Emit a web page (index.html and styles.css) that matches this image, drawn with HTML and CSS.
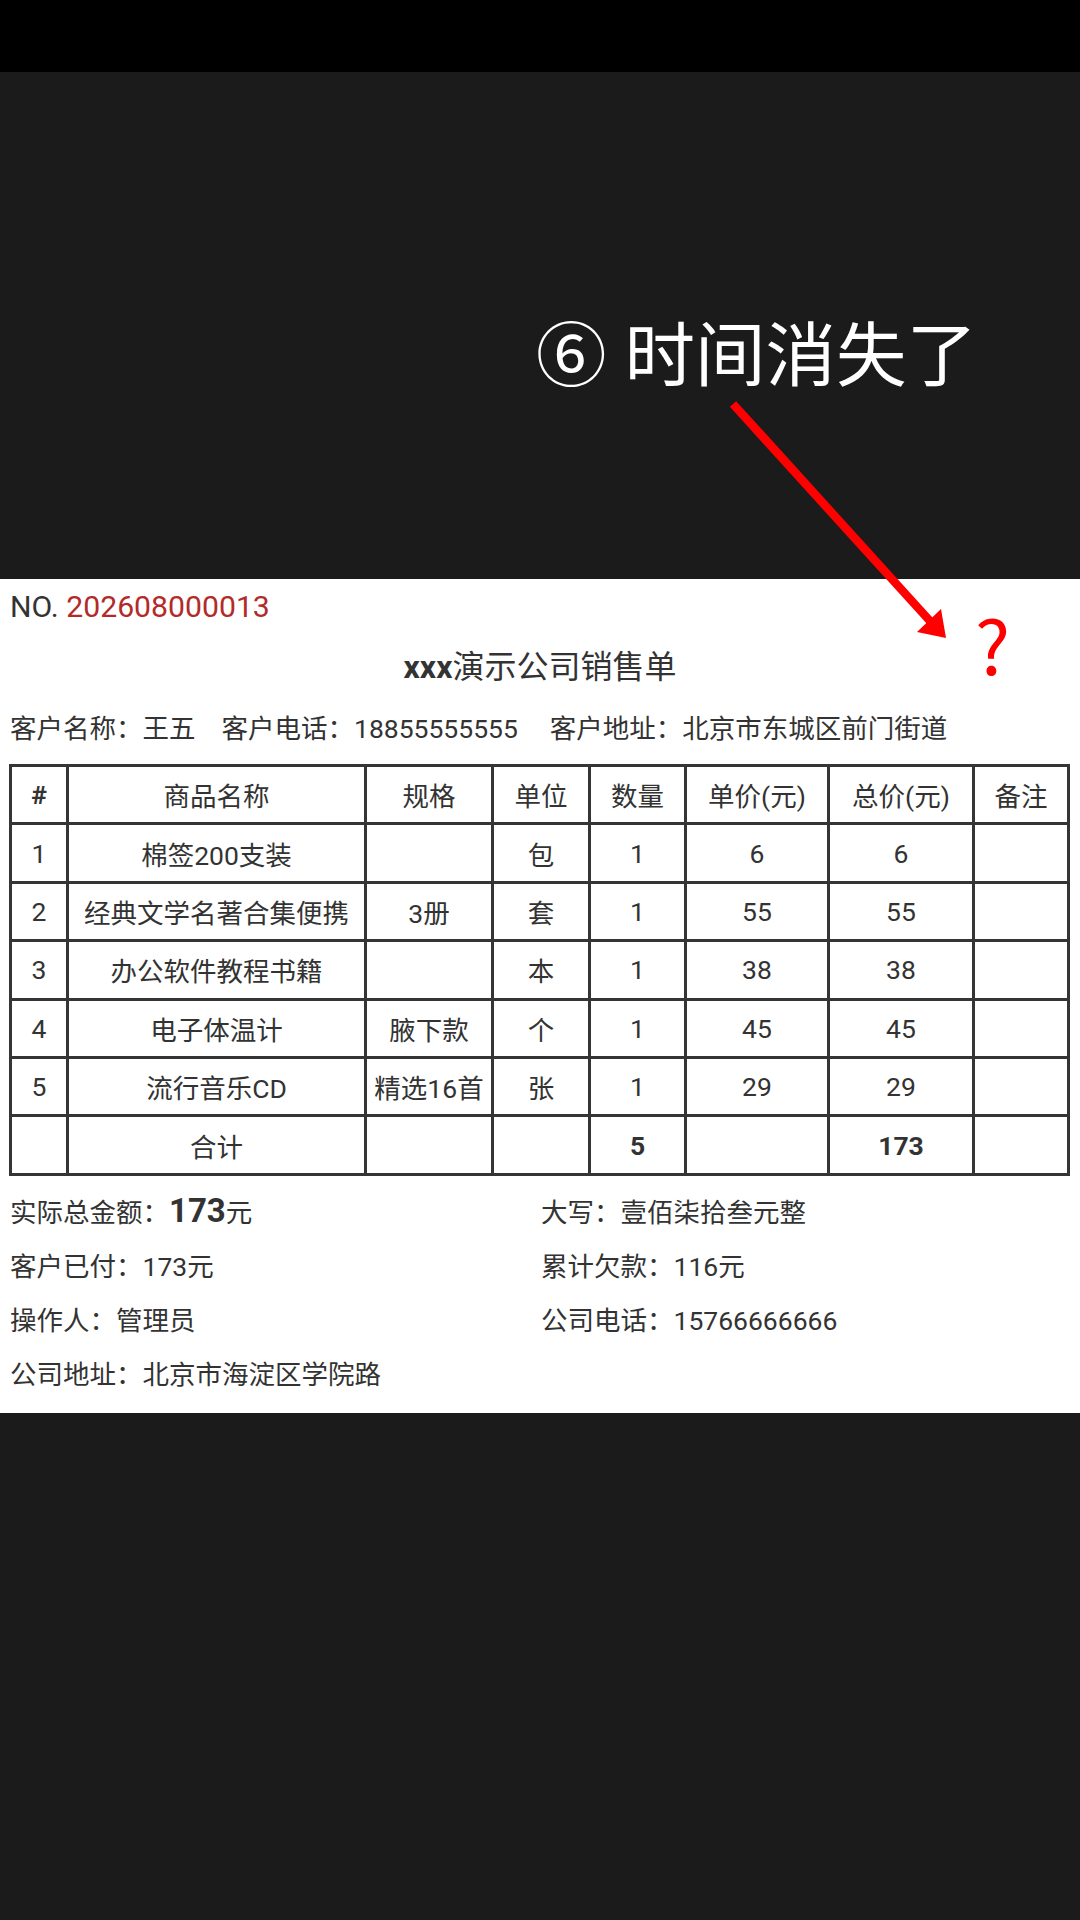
FILE: index.html
```html
<!DOCTYPE html>
<html lang="zh-CN">
<head>
<meta charset="utf-8">
<title>xxx演示公司销售单</title>
<link rel="stylesheet" href="styles.css">
</head>
<body>
<div class="screen">
  <div class="statusbar"></div>
  <div class="backdrop"></div>
  <div class="sheet">
    <div class="no">NO. <span class="no-num">202608000013</span></div>
    <div class="title"><b>xxx</b>演示公司销售单</div>
    <div class="customer">
      <span>客户名称：王五</span>
      <span class="phone">客户电话：18855555555</span>
      <span>客户地址：北京市东城区前门街道</span>
    </div>
    <table class="items">
      <colgroup>
        <col class="c1"><col class="c2"><col class="c3"><col class="c4"><col class="c5"><col class="c6"><col class="c7"><col class="c8">
      </colgroup>
      <thead>
        <tr><th class="hash">#</th><th>商品名称</th><th>规格</th><th>单位</th><th>数量</th><th>单价(元)</th><th>总价(元)</th><th>备注</th></tr>
      </thead>
      <tbody>
        <tr><td>1</td><td>棉签200支装</td><td></td><td>包</td><td>1</td><td>6</td><td>6</td><td></td></tr>
        <tr><td>2</td><td>经典文学名著合集便携</td><td>3册</td><td>套</td><td>1</td><td>55</td><td>55</td><td></td></tr>
        <tr><td>3</td><td>办公软件教程书籍</td><td></td><td>本</td><td>1</td><td>38</td><td>38</td><td></td></tr>
        <tr><td>4</td><td>电子体温计</td><td>腋下款</td><td>个</td><td>1</td><td>45</td><td>45</td><td></td></tr>
        <tr><td>5</td><td>流行音乐CD</td><td>精选16首</td><td>张</td><td>1</td><td>29</td><td>29</td><td></td></tr>
        <tr><td></td><td>合计</td><td></td><td></td><td class="strong">5</td><td></td><td class="strong">173</td><td></td></tr>
      </tbody>
    </table>
    <div class="summary">
      <div>实际总金额：<span class="big">173</span>元</div>
      <div>大写：壹佰柒拾叁元整</div>
      <div>客户已付：173元</div>
      <div>累计欠款：116元</div>
      <div>操作人：管理员</div>
      <div>公司电话：15766666666</div>
      <div>公司地址：北京市海淀区学院路</div>
      <div></div>
    </div>
  </div>

  <div class="note"><span class="circ">⑥</span>时间消失了</div>
  <svg class="arrow" width="1080" height="1920" viewBox="0 0 1080 1920">
    <line x1="733" y1="404" x2="930" y2="621" stroke="#ff0000" stroke-width="8.5"/>
    <polygon points="946,638 917,632 941,609" fill="#ff0000"/>
  </svg>
  <span class="qmark">?</span>
</div>
</body>
</html>
```
FILE: styles.css
```css
* { box-sizing: border-box; }

body {
  margin: 0;
  background: #1b1b1b;
  font-family: Roboto, "Noto Sans CJK SC", sans-serif;
  color: #333;
}

.screen {
  position: relative;
  width: 1080px;
  height: 1920px;
  overflow: hidden;
}

.statusbar {
  height: 72px;
  background: #000;
}

.backdrop {
  height: 507px;
}

.sheet {
  background: #fff;
  height: 834px;
  padding: 8px 10px 0;
}

.no {
  font-size: 30.2px;
  line-height: 40px;
}

.no-num {
  color: #b22a2a;
}

.title {
  margin-top: 20px;
  text-align: center;
  font-size: 32px;
  line-height: 40px;
}

.title b {
  font-weight: 700;
}

.customer {
  display: flex;
  gap: 26px;
  margin-top: 22px;
  font-size: 26.5px;
  line-height: 40px;
  white-space: nowrap;
}

.customer .phone {
  margin-right: 6px;
}

.items {
  margin-top: 15px;
  margin-left: -1px;
  width: 1061px;
  table-layout: fixed;
  border-collapse: separate;
  border-spacing: 0;
  border-left: 3px solid #353535;
  border-top: 3px solid #353535;
  font-size: 26.5px;
}

.items th,
.items td {
  height: 58.4px;
  padding: 0;
  border-right: 3px solid #353535;
  border-bottom: 3px solid #353535;
  text-align: center;
  vertical-align: middle;
  font-weight: 400;
  white-space: nowrap;
}

.items .hash,
.items .strong {
  font-weight: 700;
}

.c1 { width: 57px; }
.c2 { width: 298px; }
.c3 { width: 127px; }
.c4 { width: 97px; }
.c5 { width: 96px; }
.c6 { width: 143px; }
.c7 { width: 145px; }
.c8 { width: 95px; }

.summary {
  display: grid;
  grid-template-columns: 531px 1fr;
  margin-top: 10px;
  font-size: 26.5px;
  line-height: 54px;
  white-space: nowrap;
}

.summary .big {
  font-size: 33px;
  font-weight: 700;
  line-height: 1;
}

.note {
  position: absolute;
  left: 536px;
  top: 315px;
  font-family: "Noto Sans CJK SC", sans-serif;
  font-size: 70.5px;
  line-height: 70.5px;
  color: #fff;
  white-space: nowrap;
}

.note .circ {
  margin-right: 18px;
}

.arrow {
  position: absolute;
  left: 0;
  top: 0;
  pointer-events: none;
}

.qmark {
  position: absolute;
  left: 975px;
  top: 606px;
  font-family: "Noto Sans CJK SC", sans-serif;
  font-size: 74px;
  line-height: 74px;
  color: #ff0000;
}
```
